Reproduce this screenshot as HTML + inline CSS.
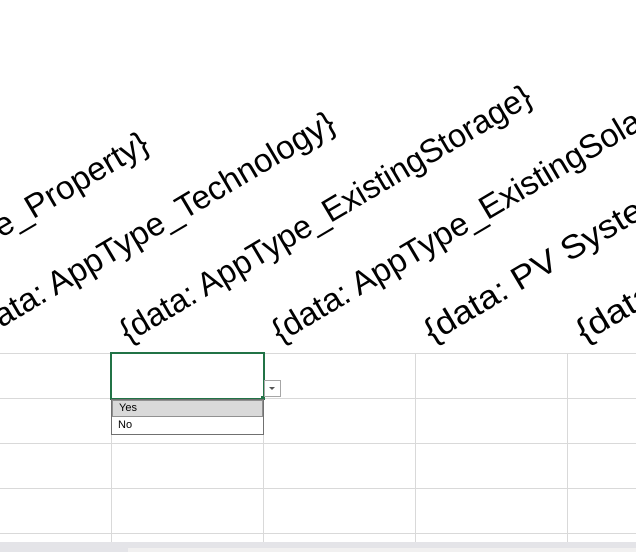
<!DOCTYPE html>
<html><head><style>
body{margin:0;width:636px;height:552px;overflow:hidden;background:#fff;position:relative;font-family:"Liberation Sans",sans-serif}
.h{position:absolute;left:0;width:636px;height:1px;background:#d9d9d9}
.v{position:absolute;top:353px;height:189px;width:1px;background:#d9d9d9}
</style></head><body>
<svg width="636" height="360" style="position:absolute;left:0;top:0" font-family="Liberation Sans, sans-serif" font-size="33" fill="#000">
<text x="-176" y="343" transform="rotate(-30.6 -176 343)" textLength="380" lengthAdjust="spacingAndGlyphs">{data: AppType_Property}</text>
<text x="-24" y="343" transform="rotate(-30.6 -24 343)" textLength="420" lengthAdjust="spacingAndGlyphs">{data: AppType_Technology}</text>
<text x="128" y="343" transform="rotate(-30.6 128 343)" textLength="472" lengthAdjust="spacingAndGlyphs">{data: AppType_ExistingStorage}</text>
<text x="280" y="343" transform="rotate(-30.6 280 343)" textLength="445" lengthAdjust="spacingAndGlyphs">{data: AppType_ExistingSolar}</text>
<text x="432" y="343" transform="rotate(-30.6 432 343)" textLength="290" lengthAdjust="spacingAndGlyphs">{data: PV System}</text>
<text x="584" y="343" transform="rotate(-30.6 584 343)" textLength="95" lengthAdjust="spacingAndGlyphs">{data:</text>
</svg>
<div class="h" style="top:353px"></div>
<div class="h" style="top:398px"></div>
<div class="h" style="top:443px"></div>
<div class="h" style="top:488px"></div>
<div class="h" style="top:533px"></div>
<div class="v" style="left:111px"></div>
<div class="v" style="left:263px"></div>
<div class="v" style="left:415px"></div>
<div class="v" style="left:567px"></div>
<div style="position:absolute;left:0;top:542px;width:636px;height:10px;background:#e4e4e8"></div>
<div style="position:absolute;left:128px;top:548px;width:508px;height:4px;background:#f1f0f0"></div>
<div style="position:absolute;left:110px;top:352px;width:151px;height:44px;border:2px solid #217346;background:#fff"></div>
<div style="position:absolute;left:261px;top:396px;width:4px;height:4px;background:#217346"></div>
<div style="position:absolute;left:264px;top:380px;width:15px;height:15px;border:1px solid #a6a6a6;background:#fff"></div>
<div style="position:absolute;left:269px;top:387px;width:0;height:0;border-left:3px solid transparent;border-right:3px solid transparent;border-top:3px solid #555"></div>
<div style="position:absolute;left:111px;top:399px;width:151px;height:34px;border:1px solid #707070;background:#fff;font-size:11px">
<div style="height:15px;background:#d9d9d9;border:1px solid #909090;line-height:15px;padding-left:6px">Yes</div>
<div style="height:17px;line-height:17px;padding-left:6px">No</div>
</div>
</body></html>
